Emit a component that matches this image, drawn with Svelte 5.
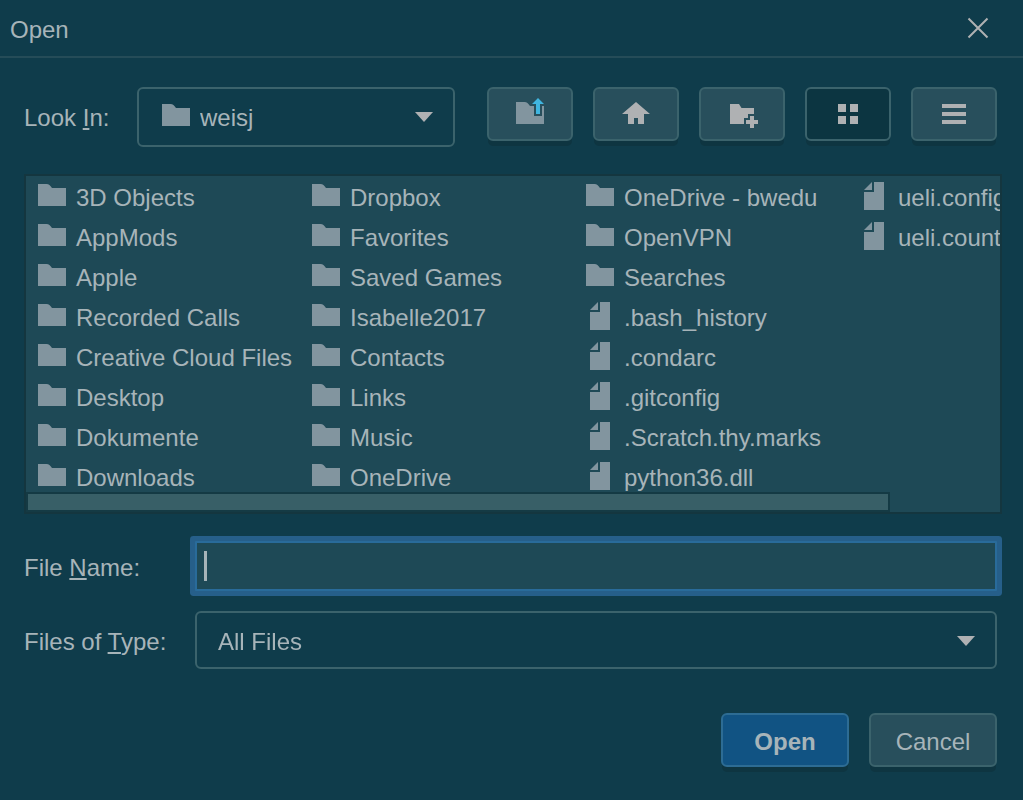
<script>
  import { onMount } from 'svelte';

  const rowsPerColumn = 8;
  const folders = [
    '3D Objects', 'AppMods', 'Apple', 'Recorded Calls', 'Creative Cloud Files',
    'Desktop', 'Dokumente', 'Downloads', 'Dropbox', 'Favorites', 'Saved Games',
    'Isabelle2017', 'Contacts', 'Links', 'Music', 'OneDrive',
    'OneDrive - bwedu', 'OpenVPN', 'Searches'
  ];
  const files = [
    '.bash_history', '.condarc', '.gitconfig', '.Scratch.thy.marks',
    'python36.dll', 'ueli.config', 'ueli.count'
  ];
  const entries = [
    ...folders.map((name) => ({ name, folder: true })),
    ...files.map((name) => ({ name, folder: false }))
  ];

  let view = $state('grid');
  let fileName = $state('');
  let field;

  onMount(() => field.focus());
</script>

{#snippet folderIcon()}
  <svg class="icon" width="28" height="28" viewBox="0 0 28 28" aria-hidden="true">
    <path d="M0 2H8.500C11 2 12 3.500 14 6H28V24H0Z" />
  </svg>
{/snippet}

{#snippet fileIcon()}
  <svg class="icon" width="28" height="28" viewBox="0 0 28 28" aria-hidden="true">
    <path d="M12 0V8H4ZM14 0H24V28H4V10H14Z" />
  </svg>
{/snippet}

{#snippet arrow()}
  <svg class="arrow" width="18" height="10" viewBox="0 0 18 10" aria-hidden="true">
    <path d="M0 0H18L9 10Z" />
  </svg>
{/snippet}

<div class="dialog" role="dialog" aria-labelledby="title">
  <header>
    <h1 id="title">Open</h1>
    <button class="close" aria-label="Close">
      <svg width="22" height="22" viewBox="0 0 22 22" aria-hidden="true">
        <path d="M1.500 1.500L20.500 20.500M20.500 1.500L1.500 20.500" />
      </svg>
    </button>
  </header>

  <main>
    <div class="toolbar">
      <label for="look-in">Look <u>I</u>n:</label>
      <div class="combo location">
        {@render folderIcon()}
        <select id="look-in"><option>weisj</option></select>
        {@render arrow()}
      </div>
      <div class="tools">
        <button class="btn" aria-label="Up one level">
          <svg width="32" height="32" viewBox="0 0 32 32">
            <path class="muted" d="M2 4H10.500C13 4 14 5.500 16 8H20V18H28V8H30V26H2Z" />
            <path class="accent" d="M24 0L30 6H26V16H22V6H18Z" />
          </svg>
        </button>
        <button class="btn" aria-label="Home">
          <svg width="32" height="32" viewBox="0 0 32 32">
            <path d="M16 4L30 16H24V26H18V20H14V26H8V16H2Z" />
          </svg>
        </button>
        <button class="btn" aria-label="Create new folder">
          <svg width="32" height="32" viewBox="0 0 32 32">
            <path d="M4 6H13L15.500 10H28V16H22V20H18V26H4ZM24 18H28V22H32V26H28V30H24V26H20V22H24Z" />
          </svg>
        </button>
        <button class="btn" class:pressed={view === 'grid'} aria-label="List view" onclick={() => (view = 'grid')}>
          <svg width="32" height="32" viewBox="0 0 32 32">
            <path d="M6 6H14V14H6ZM18 6H26V14H18ZM6 18H14V26H6ZM18 18H26V26H18Z" />
          </svg>
        </button>
        <button class="btn" class:pressed={view === 'details'} aria-label="Details view" onclick={() => (view = 'details')}>
          <svg width="32" height="32" viewBox="0 0 32 32">
            <path d="M4 6H28V10H4ZM4 14H28V18H4ZM4 22H28V26H4Z" />
          </svg>
        </button>
      </div>
    </div>

    <div class="browser">
      <ul style:grid-template-rows="repeat({rowsPerColumn}, 40px)">
        {#each entries as entry}
          <li>
            {#if entry.folder}{@render folderIcon()}{:else}{@render fileIcon()}{/if}
            <span>{entry.name}</span>
          </li>
        {/each}
      </ul>
      <div class="track"><div class="thumb"></div></div>
    </div>

    <div class="row">
      <label for="file-name">File <u>N</u>ame:</label>
      <div class="field">
        <input id="file-name" type="text" autocomplete="off" bind:this={field} bind:value={fileName} />
        {#if !fileName}<span class="caret"></span>{/if}
      </div>
    </div>

    <div class="row types">
      <label for="file-type">Files of <u>T</u>ype:</label>
      <div class="combo">
        <select id="file-type"><option>All Files</option></select>
        {@render arrow()}
      </div>
    </div>

    <div class="actions">
      <button class="btn primary">Open</button>
      <button class="btn">Cancel</button>
    </div>
  </main>
</div>

<style>
  :global(body) {
    background: #0f3c4b;
  }

  .dialog {
    color: #a7b4b9;
    font: 24px/40px 'Liberation Sans', Arial, sans-serif;
  }

  .dialog * {
    box-sizing: border-box;
  }

  header {
    display: flex;
    align-items: center;
    justify-content: space-between;
    height: 58px;
    padding: 0 34px 0 10px;
    border-bottom: 2px solid #254c58;
  }

  h1 {
    margin: 0;
    padding-top: 4px;
    font: inherit;
  }

  button,
  select,
  input {
    margin: 0;
    color: inherit;
    font: inherit;
  }

  svg {
    display: block;
    flex: none;
    fill: #afb1b3;
  }

  .close {
    padding: 0;
    border: 0;
    background: none;
  }

  .close svg {
    fill: none;
    stroke: #afb1b3;
    stroke-width: 2;
  }

  main {
    padding: 29px 21px 28px 24px;
  }

  u {
    text-decoration-thickness: 2px;
    text-underline-offset: 2px;
    text-decoration-skip-ink: none;
  }

  .toolbar {
    display: flex;
    padding-right: 5px;
  }

  .toolbar label {
    flex: none;
    align-self: center;
    width: 113px;
    padding-top: 2px;
  }

  .combo {
    position: relative;
    display: flex;
    flex: 1;
    align-items: center;
    min-width: 0;
    height: 58px;
    border: 2px solid #3b636c;
    border-radius: 6px;
  }

  .location {
    height: 60px;
    margin-right: 32px;
    padding-left: 23px;
  }

  .location .icon {
    margin-bottom: 2px;
  }

  .combo select {
    flex: 1;
    min-width: 0;
    height: 100%;
    padding: 4px 44px 0 21px;
    border: 0;
    outline: 0;
    background: none;
    appearance: none;
  }

  .location select {
    padding: 2px 44px 0 10px;
  }

  .combo .arrow {
    position: absolute;
    top: 23px;
    right: 20px;
    pointer-events: none;
  }

  .icon,
  .muted {
    fill: #82959f;
  }

  .accent {
    fill: #40b6e0;
  }

  .tools,
  .actions {
    display: flex;
    gap: 20px;
  }

  .btn {
    display: flex;
    align-items: center;
    justify-content: center;
    width: 86px;
    height: 54px;
    padding: 0;
    border: 2px solid #3b636c;
    border-radius: 6px;
    background: #284f5c;
    box-shadow: 0 6px 0 -1px #0e3541;
  }

  .btn.pressed {
    background: #0c3541;
  }

  .browser {
    margin-top: 27px;
    border: 2px solid #14363f;
    background: #1e4956;
  }

  ul {
    display: grid;
    grid-auto-flow: column;
    grid-auto-columns: 274px;
    height: 316px;
    margin: 0;
    padding: 2px 0 0 12px;
    overflow: hidden;
    list-style: none;
  }

  li {
    display: flex;
    gap: 10px;
    white-space: nowrap;
  }

  li .icon {
    margin-top: 4px;
  }

  .track {
    height: 20px;
  }

  .thumb {
    width: 88.7%;
    height: 100%;
    border: 2px solid #143a44;
    background: #385f67;
  }

  .row {
    display: flex;
    align-items: center;
    margin-top: 27px;
    padding-right: 5px;
  }

  .row label {
    flex: none;
    width: 171px;
    padding-top: 4px;
  }

  .types {
    margin-top: 20px;
  }

  .field {
    position: relative;
    flex: 1;
    height: 50px;
  }

  input {
    display: block;
    width: 100%;
    height: 100%;
    padding: 4px 7px 0;
    border: 2px solid #296b9a;
    border-radius: 1px;
    outline: 0;
    background: #1e4956;
    box-shadow: 0 0 0 5px #265f8a;
  }

  input:has(+ .caret) {
    caret-color: transparent;
  }

  .caret {
    position: absolute;
    top: 10px;
    left: 9px;
    width: 3px;
    height: 30px;
    background: #a7b4b9;
    pointer-events: none;
  }

  .actions {
    justify-content: flex-end;
    margin-top: 44px;
    padding-right: 5px;
  }

  .actions .btn {
    width: 128px;
    padding-top: 4px;
  }

  .actions .primary {
    border-color: #2d6c94;
    background: #115383;
    font-weight: bold;
  }
</style>
